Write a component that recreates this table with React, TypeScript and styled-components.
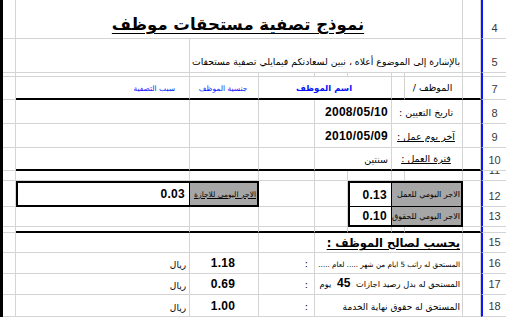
import React from 'react';
import styled, { createGlobalStyle, css } from 'styled-components';

const GRID = '#d4d4d4';
const INK = '#000';
const BLUE = '#0a14ff';
const SHADE = '#a6a6a6';

// physical left-to-right: A, B, C, D, E, F, G, H, I, row header
const COLS = '13px 174px 69px 56px 33px 44px 13px 58px 18px 25px';

const GlobalStyle = createGlobalStyle`
  html, body {
    margin: 0;
    padding: 0;
    background: #fff;
  }
  body {
    width: 506px;
    height: 317px;
    overflow: hidden;
    font-family: "DejaVu Sans", "Noto Sans", sans-serif;
    color: ${INK};
  }
`;

const Sheet = styled.div`
  width: 503px;
  height: 317px;
  border-left: 3px solid ${INK};
  overflow: hidden;
`;

const Row = styled.div<{ $h: number; $rule?: boolean }>`
  display: grid;
  grid-template-columns: ${COLS};
  height: ${p => p.$h}px;

  ${p => p.$rule && css`
    & > *:not(:first-child):not(:last-child) {
      border-bottom: 2px solid ${INK};
    }
  `}
`;

type Align = 'start' | 'center' | 'end';

const Cell = styled.div<{ $span?: number; $align?: Align; $pr?: number; $pb?: number }>`
  grid-column: span ${p => p.$span ?? 1};
  box-sizing: border-box;
  min-width: 0;
  border-right: 1px solid ${GRID};
  border-bottom: 1px solid ${GRID};
  display: flex;
  align-items: flex-end;
  justify-content: ${p => p.$align ?? 'start'};
  direction: rtl;
  padding-right: ${p => p.$pr ?? 2}px;
  padding-bottom: ${p => p.$pb ?? 2}px;
  overflow: hidden;
  white-space: nowrap;
`;

type Edges = { t?: number; r?: number; b?: number; l?: number };

const BoxCell = styled(Cell)<{ $edges: Edges; $shade?: boolean }>`
  background: ${p => (p.$shade ? SHADE : '#fff')};
  border-top: ${p => (p.$edges.t ? `${p.$edges.t}px solid ${INK}` : 'none')};
  border-right: ${p => (p.$edges.r ? `${p.$edges.r}px solid ${INK}` : 'none')};
  border-bottom: ${p => (p.$edges.b ? `${p.$edges.b}px solid ${INK}` : `1px solid ${GRID}`)};
  border-left: ${p => (p.$edges.l ? `${p.$edges.l}px solid ${INK}` : 'none')};
  align-items: center;
  padding-bottom: 0;
`;

const RowNum = styled.div`
  box-sizing: border-box;
  border-left: 2px solid ${BLUE};
  border-bottom: 1px solid ${GRID};
  display: flex;
  align-items: flex-end;
  justify-content: center;
  padding-bottom: 3px;
  overflow: hidden;
  font-family: "Liberation Sans", Arial, sans-serif;
  font-size: 11px;
  line-height: 13px;
  color: #3a3a3a;
`;

const Title = styled.span`
  font-size: 16.5px;
  font-weight: bold;
  text-decoration: underline;
  text-underline-offset: 3px;
`;

const Lead = styled.span`
  font-size: 9.3px;
`;

const Heading = styled.span<{ $strong?: boolean }>`
  color: ${BLUE};
  font-size: ${p => (p.$strong ? 8.5 : 7.5)}px;
  font-weight: ${p => (p.$strong ? 'bold' : 'normal')};
`;

const Label = styled.span<{ $underline?: boolean; $size?: number }>`
  font-size: ${p => p.$size ?? 9.5}px;
  text-decoration: ${p => (p.$underline ? 'underline' : 'none')};
`;

const Figure = styled.span<{ $size?: number }>`
  direction: ltr;
  unicode-bidi: isolate;
  font-family: "Liberation Sans", Arial, sans-serif;
  font-weight: bold;
  font-size: ${p => p.$size ?? 12}px;
  letter-spacing: 0.3px;
`;

const Section = styled.span`
  font-size: 11.5px;
  font-weight: bold;
  text-decoration: underline;
  text-underline-offset: 2px;
`;

const Entry = styled.span<{ $size?: number }>`
  font-size: ${p => p.$size ?? 9}px;

  b {
    font-family: "Liberation Sans", Arial, sans-serif;
    font-size: 12px;
    margin: 0 3px;
  }
`;

const Blank: React.FC<{ n: number }> = ({ n }) => (
  <>
    {Array.from({ length: n }, (_, i) => (
      <Cell key={i} />
    ))}
  </>
);

const dues = [
  { text: <Entry $size={7.2}>المستحق له راتب  5 ايام من شهر ..... لعام .....</Entry>, amount: '1.18' },
  { text: <Entry $size={8.3}>المستحق له بدل رصيد اجازات <b>45</b> يوم</Entry>, amount: '0.69' },
  { text: <Entry>المستحق له حقوق نهاية الخدمة</Entry>, amount: '1.00' },
];

const periods = [
  { label: 'تاريخ التعيين :', value: <Figure>2008/05/10</Figure>, underline: false },
  { label: 'آخر يوم عمل :', value: <Figure>2010/05/09</Figure>, underline: true },
  { label: 'فترة العمل :', value: <Label>سنتين</Label>, underline: true },
];

export default function App() {
  return (
    <>
      <GlobalStyle />
      <Sheet>
        <Row $h={39}>
          <Cell />
          <Cell $span={7} $align="center" $pb={4}>
            <Title>نموذج تصفية مستحقات موظف</Title>
          </Cell>
          <Cell />
          <RowNum>4</RowNum>
        </Row>

        <Row $h={34}>
          <Cell />
          <Cell />
          <Cell $span={6} $pb={5}>
            <Lead>بالإشارة إلى الموضوع أعلاه ، نبين لسعادتكم فيمايلي تصفية مستحقات</Lead>
          </Cell>
          <Cell />
          <RowNum>5</RowNum>
        </Row>

        <Row $h={3}>
          <Blank n={9} />
          <RowNum />
        </Row>

        <Row $h={24} $rule>
          <Cell />
          <Cell $pr={14} $pb={5}>
            <Heading>سبب التصفية</Heading>
          </Cell>
          <Cell $align="center" $pb={5}>
            <Heading>جنسية الموظف</Heading>
          </Cell>
          <Cell $span={3} $align="center" $pb={5}>
            <Heading $strong>اسم الموظف</Heading>
          </Cell>
          <Cell />
          <Cell $align="center" $pb={5}>
            <Label>الموظف /</Label>
          </Cell>
          <Cell />
          <RowNum>7</RowNum>
        </Row>

        {periods.map((p, i) => (
          <Row key={p.label} $h={i === 2 ? 23 : 24} $rule={i === 2}>
            <Blank n={4} />
            <Cell $span={2} $pr={3} $pb={4}>
              {p.value}
            </Cell>
            <Cell $span={2} $align="center" $pb={5}>
              <Label $underline={p.underline}>{p.label}</Label>
            </Cell>
            <Cell />
            <RowNum>{8 + i}</RowNum>
          </Row>
        ))}

        <Row $h={10}>
          <Blank n={9} />
          <RowNum>11</RowNum>
        </Row>

        <Row $h={26}>
          <Cell />
          <BoxCell $edges={{ t: 2, l: 2, b: 2, r: 1 }} $pr={4}>
            <Figure>0.03</Figure>
          </BoxCell>
          <BoxCell $edges={{ t: 2, r: 2, b: 2 }} $shade $pr={1}>
            <Label $underline $size={7.5}>الاجر اليومي للاجازة</Label>
          </BoxCell>
          <Cell />
          <Cell />
          <BoxCell $edges={{ t: 2, l: 2, b: 1, r: 1 }} $pr={4}>
            <Figure>0.13</Figure>
          </BoxCell>
          <BoxCell $span={2} $edges={{ t: 2, r: 2, b: 1 }} $shade $pr={1}>
            <Label $size={8}>الاجر اليومي للعمل</Label>
          </BoxCell>
          <Cell />
          <RowNum>12</RowNum>
        </Row>

        <Row $h={20}>
          <Blank n={5} />
          <BoxCell $edges={{ l: 2, b: 2, r: 1 }} $pr={4}>
            <Figure>0.10</Figure>
          </BoxCell>
          <BoxCell $span={2} $edges={{ r: 2, b: 2 }} $shade $pr={1}>
            <Label $size={8}>الاجر اليومي للحقوق</Label>
          </BoxCell>
          <Cell />
          <RowNum>13</RowNum>
        </Row>

        <Row $h={6} $rule>
          <Blank n={9} />
          <RowNum>14</RowNum>
        </Row>

        <Row $h={20}>
          <Blank n={4} />
          <Cell $span={4} $pb={2}>
            <Section>يحسب لصالح الموظف :</Section>
          </Cell>
          <Cell />
          <RowNum>15</RowNum>
        </Row>

        {dues.map((d, i) => (
          <Row key={d.amount} $h={i === 2 ? 22 : 21}>
            <Cell />
            <Cell $pr={3} $pb={3}>
              <Label $size={9}>ريال</Label>
            </Cell>
            <Cell $align="center" $pb={3}>
              <Figure>{d.amount}</Figure>
            </Cell>
            <Cell $pr={6} $pb={4}>
              <Label>:</Label>
            </Cell>
            <Cell $span={4} $pb={4}>
              {d.text}
            </Cell>
            <Cell />
            <RowNum>{16 + i}</RowNum>
          </Row>
        ))}
      </Sheet>
    </>
  );
}
